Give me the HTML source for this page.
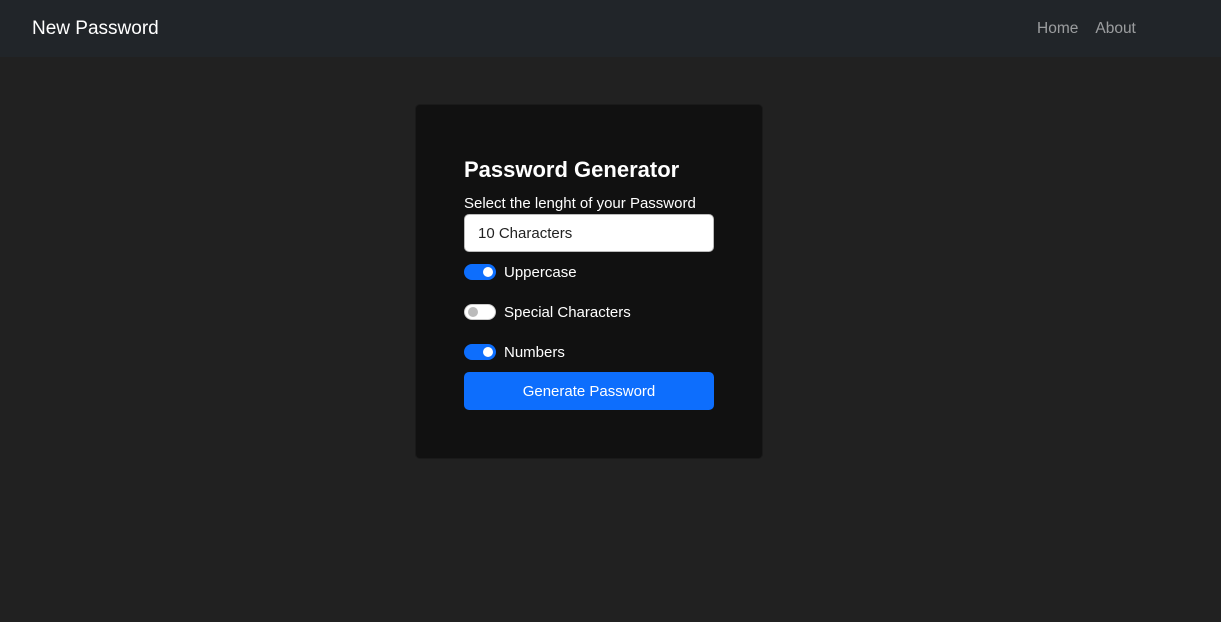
<!DOCTYPE html>
<html><head><style>
*{box-sizing:border-box;margin:0;padding:0}
body{width:1221px;height:622px;background:#212121;font-family:"Liberation Sans",sans-serif;color:#fff;position:relative;overflow:hidden}
nav{height:57px;background:#212529;position:relative}
.brand{position:absolute;left:32px;top:18px;font-size:19px;color:#fff}
.links{position:absolute;left:1037px;top:20px;font-size:15.5px;color:rgba(255,255,255,.55)}
.links span{margin-right:17px}
.card{position:absolute;left:415px;top:104px;width:348px;height:355px;background:#111;border-radius:5px;border:1px solid #1a1a1a}
h2{position:absolute;left:48px;top:52px;font-size:22px;font-weight:bold}
.lbl{position:absolute;left:48px;top:90px;font-size:15px}
.inp{position:absolute;left:48px;top:109px;width:250px;height:38px;background:#fff;border:1px solid #bbb;border-radius:5px;color:#222;font-size:15px;padding:10px 13px}
.sw{position:absolute;left:48px;width:32px;height:16px;border-radius:8px}
.sw.on{background:#0d6efd}
.sw.on::after{content:"";position:absolute;right:3px;top:3px;width:10px;height:10px;border-radius:50%;background:#fff}
.sw.off{background:#fff;border:1px solid #ccc}
.sw.off::after{content:"";position:absolute;left:3px;top:2px;width:10px;height:10px;border-radius:50%;background:#bbb}
.t{position:absolute;left:88px;font-size:15px}
.btn{position:absolute;left:48px;top:267px;width:250px;height:38px;background:#0d6efd;border-radius:5px;text-align:center;line-height:40px;font-size:15px}
</style></head><body>
<nav><div class="brand">New Password</div><div class="links"><span>Home</span><span>About</span></div></nav>
<div class="card">
<h2>Password Generator</h2>
<div class="lbl">Select the lenght of your Password</div>
<div class="inp">10 Characters</div>
<div class="sw on" style="top:159px"></div><div class="t" style="top:159px">Uppercase</div>
<div class="sw off" style="top:199px"></div><div class="t" style="top:199px">Special Characters</div>
<div class="sw on" style="top:239px"></div><div class="t" style="top:239px">Numbers</div>
<div class="btn">Generate Password</div>
</div>
</body></html>
